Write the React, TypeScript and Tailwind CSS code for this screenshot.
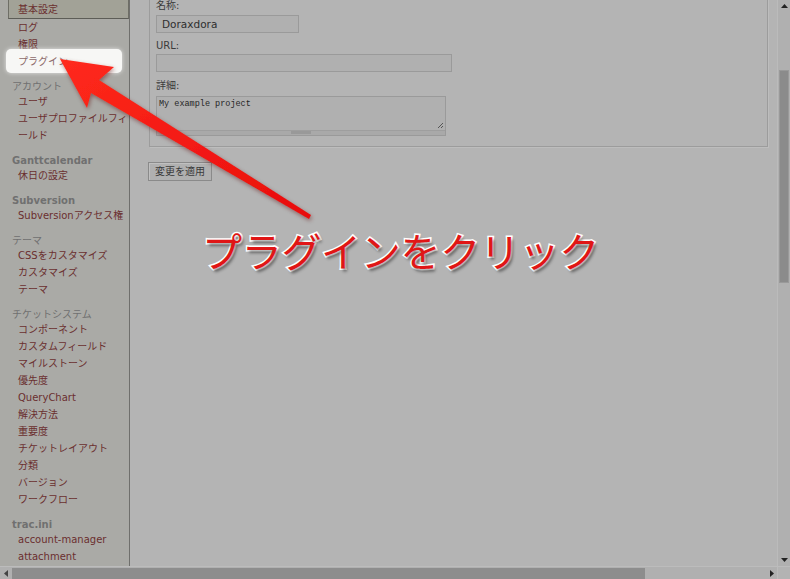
import React from "react";

type NavEntry =
  | { kind: "item"; label: string; selected?: boolean; highlight?: boolean }
  | { kind: "head"; label: string; bold?: boolean };

const nav: NavEntry[] = [
  { kind: "item", label: "基本設定", selected: true },
  { kind: "item", label: "ログ" },
  { kind: "item", label: "権限" },
  { kind: "item", label: "プラグイン", highlight: true },
  { kind: "head", label: "アカウント" },
  { kind: "item", label: "ユーザ" },
  { kind: "item", label: "ユーザプロファイルフィ" },
  { kind: "item", label: "ールド" },
  { kind: "head", label: "Ganttcalendar", bold: true },
  { kind: "item", label: "休日の設定" },
  { kind: "head", label: "Subversion", bold: true },
  { kind: "item", label: "Subversionアクセス権" },
  { kind: "head", label: "テーマ" },
  { kind: "item", label: "CSSをカスタマイズ" },
  { kind: "item", label: "カスタマイズ" },
  { kind: "item", label: "テーマ" },
  { kind: "head", label: "チケットシステム" },
  { kind: "item", label: "コンポーネント" },
  { kind: "item", label: "カスタムフィールド" },
  { kind: "item", label: "マイルストーン" },
  { kind: "item", label: "優先度" },
  { kind: "item", label: "QueryChart" },
  { kind: "item", label: "解決方法" },
  { kind: "item", label: "重要度" },
  { kind: "item", label: "チケットレイアウト" },
  { kind: "item", label: "分類" },
  { kind: "item", label: "バージョン" },
  { kind: "item", label: "ワークフロー" },
  { kind: "head", label: "trac.ini", bold: true },
  { kind: "item", label: "account-manager" },
  { kind: "item", label: "attachment" },
  { kind: "item", label: "authz_policy" },
];

const Sidebar: React.FC = () => (
  <nav className="w-[130px] shrink-0 bg-[#aaaaa6] border-r border-[#6f6f6c] overflow-hidden pt-px">
    {nav.map((n, i) => {
      if (n.kind === "head") {
        return (
          <div
            key={i}
            className={`h-[13px] mt-[10px] pl-[12px] leading-[13px] whitespace-nowrap text-[#707070] ${
              n.bold ? "font-bold" : ""
            }`}
          >
            {n.label}
          </div>
        );
      }
      if (n.selected) {
        return (
          <div
            key={i}
            className="h-[17px] ml-[8px] -mt-[2px] pt-[2px] box-content pl-[9px] leading-[17px] bg-[#a2a297] border border-t-0 border-[#6e6e66] border-b-[#5d5d57] text-[#6b2f2f] whitespace-nowrap"
          >
            {n.label}
          </div>
        );
      }
      if (n.highlight) {
        return (
          <div key={i} className="relative h-[17px] leading-[17px] whitespace-nowrap">
            <span className="absolute left-[6px] top-[-4px] w-[116px] h-[24px] rounded-[5px] bg-[#f7f7f5] shadow-[0_0_4px_rgba(255,255,255,0.7)]" />
            <span className="relative pl-[18px] text-[#8d6a6a]">{n.label}</span>
          </div>
        );
      }
      return (
        <div key={i} className="h-[17px] pl-[18px] leading-[17px] text-[#6b2f2f] whitespace-nowrap">
          {n.label}
        </div>
      );
    })}
  </nav>
);

const MainForm: React.FC = () => (
  <main className="flex-1 min-w-0 bg-[#b4b4b4] overflow-hidden">
    <div className="ml-[19px] mr-[9px] -mt-[10px] border border-[#9c9c9c] shadow-[1px_1px_0_#bdbdbd] pt-[9px] pb-[10px] pl-[6px] text-[#3b3b3b]">
      <div className="h-[12px] leading-[12px]">名称:</div>
      <div className="mt-[3px] w-[143px] h-[18px] border border-[#9a9a9a] bg-[#b0b0b0] pl-[5px] leading-[16px] text-[#2e2e2e] text-[10.5px]">
        Doraxdora
      </div>
      <div className="mt-[7px] h-[12px] leading-[12px]">URL:</div>
      <div className="mt-[2px] w-[296px] h-[18px] border border-[#9a9a9a] bg-[#b0b0b0]" />
      <div className="mt-[8px] h-[12px] leading-[12px]">詳細:</div>
      <div className="mt-[4px] w-[290px] h-[40px] border border-[#9a9a9a] bg-[#b0b0b0] flex flex-col">
        <div className="flex-1 relative pl-[2px] pt-[2px] font-['Liberation_Mono',monospace] text-[8.5px] leading-[10px] text-[#262626]">
          My example project
          <svg className="absolute right-[1px] bottom-[1px]" width="7" height="7" viewBox="0 0 7 7">
            <path d="M6 1 L1 6 M6 4 L4 6" stroke="#555" strokeWidth="1" />
          </svg>
        </div>
        <div className="h-[5px] bg-[#a9a9a9] border-t border-[#9e9e9e] relative">
          <span className="absolute left-[134px] top-0 w-[20px] h-[3px] bg-[#999]" />
        </div>
      </div>
    </div>
    <button className="mt-[15px] ml-[18px] w-[64px] h-[19px] border border-[#8a8a8a] bg-[#b0b0b0] shadow-[inset_1px_1px_0_#c0c0c0] text-[#3a3a3a] text-[10px] leading-[17px]">
      変更を適用
    </button>
  </main>
);

const VScroll: React.FC = () => (
  <div className="w-[13px] shrink-0 bg-[#b0b0b0] border-l border-[#bbbbbb] flex flex-col items-center">
    <svg className="mt-[4px]" width="7" height="5" viewBox="0 0 7 5">
      <path d="M0 4 L3.5 0 L7 4 Z" fill="#222" />
    </svg>
    <div className="mt-[61px] w-[10px] h-[213px] bg-[#8b8b8b] border border-[#999]" />
    <div className="flex-1" />
    <svg className="mb-[4px]" width="7" height="5" viewBox="0 0 7 5">
      <path d="M0 1 L3.5 5 L7 1 Z" fill="#222" />
    </svg>
  </div>
);

const HScroll: React.FC = () => (
  <div className="h-[13px] shrink-0 flex bg-[#b0b0b0] border-t border-[#bcbcbc]">
    <div className="flex-1 flex items-center">
      <svg className="ml-[4px]" width="5" height="7" viewBox="0 0 5 7">
        <path d="M4 0 L0 3.5 L4 7 Z" fill="#444" />
      </svg>
      <div className="ml-[3px] w-[633px] h-[11px] bg-[#8d8d8d]" />
      <div className="flex-1" />
      <svg className="mr-[3px]" width="5" height="7" viewBox="0 0 5 7">
        <path d="M1 0 L5 3.5 L1 7 Z" fill="#222" />
      </svg>
    </div>
    <div className="w-[13px] bg-[#b3b3b3] border-l border-[#bbbbbb]" />
  </div>
);

const Arrow: React.FC = () => (
  <svg className="absolute left-0 top-0 pointer-events-none" width="330" height="240" viewBox="0 0 330 240">
    <defs>
      <linearGradient id="arrowFill" x1="0" y1="0" x2="1" y2="1">
        <stop offset="0" stopColor="#ff2a1c" />
        <stop offset="1" stopColor="#e80c0c" />
      </linearGradient>
      <filter id="arrowShadow" x="-20%" y="-20%" width="140%" height="140%">
        <feDropShadow dx="1" dy="2" stdDeviation="2" floodColor="#5a0000" floodOpacity="0.45" />
      </filter>
    </defs>
    <polygon
      points="60,59 114,67 99,80 311,215 309,219 91,93 87,108"
      fill="url(#arrowFill)"
      filter="url(#arrowShadow)"
    />
  </svg>
);

const Caption: React.FC = () => (
  <div className="absolute left-[202px] top-[222px] pointer-events-none whitespace-nowrap font-['Noto_Sans_CJK_JP',sans-serif] font-normal text-[40px] leading-[56px] tracking-[-0.3px] text-[#e01616] [-webkit-text-stroke:3px_#ffffff] [paint-order:stroke_fill] [text-shadow:2px_3px_3px_rgba(0,0,0,0.45)]">
    プラグインをクリック
  </div>
);

const App: React.FC = () => {
  return (
    <div className="relative w-[790px] h-[579px] overflow-hidden flex flex-col bg-[#b4b4b4] font-['DejaVu_Sans','Noto_Sans_CJK_JP',sans-serif] text-[10px]">
      <div className="flex flex-1 min-h-0">
        <Sidebar />
        <MainForm />
        <VScroll />
      </div>
      <HScroll />
      <Arrow />
      <Caption />
    </div>
  );
};

export default App;
